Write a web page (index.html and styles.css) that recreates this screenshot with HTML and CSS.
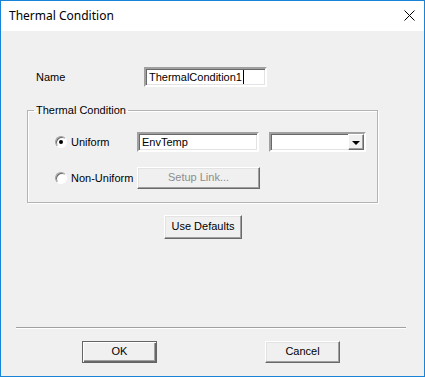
FILE: index.html
```html
<!DOCTYPE html>
<html lang="en">
   <head>
       <meta charset="UTF-8">
       <title>Thermal Condition</title>
       <link rel="stylesheet" href="styles.css">
   </head>
   <body>
       <div class="window">
           <div class="titlebar">
               <span class="title">Thermal Condition</span>
               <svg class="close" width="11" height="11" viewBox="0 0 11 11">
                   <path d="M0.5 0.5 L10.5 10.5 M10.5 0.5 L0.5 10.5" stroke="#000" stroke-width="1"/>
               </svg>
           </div>
           <div class="client">
               <div class="name-row">
                   <label class="name-label" for="name">Name</label>
                   <div class="field name-field">ThermalCondition1<span class="caret"></span></div>
               </div>

               <fieldset class="group">
                   <legend>Thermal Condition</legend>
                   <div class="group-grid">
                       <div class="option">
                           <span class="radio checked"></span>
                           <span>Uniform</span>
                       </div>
                       <div class="field">EnvTemp</div>
                       <div class="field combo">
                           <span class="combo-btn"><span class="arrow"></span></span>
                       </div>

                       <div class="option">
                           <span class="radio"></span>
                           <span>Non-Uniform</span>
                       </div>
                       <div class="btn disabled setup">Setup Link...</div>
                   </div>
               </fieldset>

               <div class="btn defaults">Use Defaults</div>

               <div class="separator"></div>

               <div class="actions">
                   <div class="btn default-btn">OK</div>
                   <div class="btn">Cancel</div>
               </div>
           </div>
       </div>
   </body>
</html>
```

FILE: styles.css
```css
body {
    margin: 0;
    padding: 0;
    font-family: "Liberation Sans", Arial, sans-serif;
    font-size: 11px;
    color: #000;
}
.window {
    width: 425px;
    height: 377px;
    box-sizing: border-box;
    border: 1px solid #1883d7;
    background-color: #f0f0f0;
    display: flex;
    flex-direction: column;
}
.titlebar {
    height: 30px;
    background-color: #fff;
    display: flex;
    align-items: center;
    justify-content: space-between;
    padding: 0 9px 0 8px;
    font-family: "Noto Sans", "Open Sans", sans-serif;
    font-size: 12px;
}
.title {
    margin-top: -1px;
}
.close {
    display: block;
    margin-top: -1px;
}
.client {
    flex: 1;
    display: flex;
    flex-direction: column;
}
.name-row {
    display: flex;
    align-items: center;
    margin-top: 36px;
    padding-left: 35px;
}
.name-label {
    width: 108px;
}
.field {
    box-sizing: border-box;
    width: 122px;
    height: 20px;
    line-height: 16px;
    padding: 0 3px;
    background-color: #fff;
    border: 2px solid;
    border-color: #a0a0a0 #fff #fff #a0a0a0;
    box-shadow: inset 1px 1px #696969, inset -1px -1px #e3e3e3;
    white-space: nowrap;
}
.name-field {
    width: 123px;
}
.caret {
    display: inline-block;
    width: 1px;
    height: 14px;
    background-color: #000;
    vertical-align: -3px;
    margin-left: 1px;
}
.group {
    box-sizing: border-box;
    width: 351px;
    height: 99px;
    margin: 17px 0 0 26px;
    padding: 0;
    min-width: 0;
    border: 1px solid #b4b4b4;
    box-shadow: 1px 1px #fff, inset 1px 1px #fff;
}
.group legend {
    font-size: 11px;
    line-height: 13px;
    padding: 0 2px;
    margin-left: 6px;
}
.group-grid {
    display: grid;
    grid-template-columns: 72px 122px 97px;
    grid-template-rows: 20px 22px;
    column-gap: 10px;
    row-gap: 15px;
    padding: 15px 0 0 27px;
}
.option {
    display: flex;
    align-items: center;
    gap: 4px;
    white-space: nowrap;
}
.radio {
    box-sizing: border-box;
    flex: none;
    width: 12px;
    height: 12px;
    border-radius: 50%;
    background-color: #fff;
    border: 1px solid;
    border-color: #a0a0a0 #fff #fff #a0a0a0;
    box-shadow: inset 1px 1px #696969;
    display: flex;
    align-items: center;
    justify-content: center;
}
.radio.checked::after {
    content: "";
    width: 4px;
    height: 4px;
    border-radius: 50%;
    background-color: #000;
}
.combo {
    width: 97px;
    padding: 0;
    display: flex;
    justify-content: flex-end;
}
.combo-btn {
    box-sizing: border-box;
    width: 16px;
    height: 16px;
    background-color: #f0f0f0;
    border: 1px solid;
    border-color: #fff #696969 #696969 #fff;
    box-shadow: inset -1px -1px #a0a0a0;
    display: flex;
    align-items: center;
    justify-content: center;
}
.arrow {
    width: 0;
    height: 0;
    border-left: 4px solid transparent;
    border-right: 4px solid transparent;
    border-top: 4px solid #000;
    margin: 1px 1px 0 0;
}
.btn {
    box-sizing: border-box;
    width: 75px;
    height: 22px;
    line-height: 18px;
    text-align: center;
    background-color: #f0f0f0;
    border: 1px solid;
    border-color: #fff #696969 #696969 #fff;
    box-shadow: inset -1px -1px #a0a0a0, inset 1px 1px #e3e3e3;
}
.setup {
    width: 123px;
}
.disabled {
    color: #8d8d8d;
}
.defaults {
    width: 78px;
    height: 24px;
    line-height: 20px;
    margin: 12px 0 0 163px;
}
.separator {
    height: 0;
    margin: 88px 18px 0 15px;
    border-top: 1px solid #a0a0a0;
    border-bottom: 1px solid #fff;
}
.actions {
    display: flex;
    gap: 108px;
    margin-top: 12px;
    padding-left: 81px;
}
.default-btn {
    border-color: #646464;
    box-shadow: inset 1px 1px #fff, inset -1px -1px #696969, inset -2px -2px #a0a0a0;
}
```
